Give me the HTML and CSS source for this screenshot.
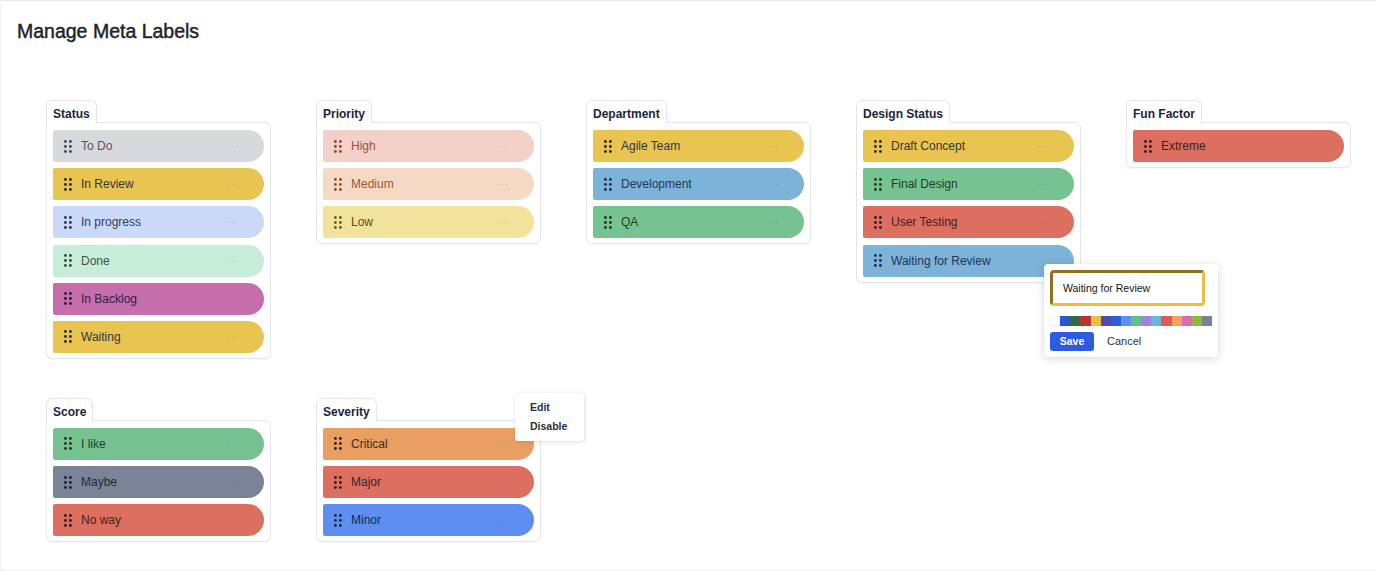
FILE: index.html
```html
<!DOCTYPE html>
<html lang="en">
<head>
<meta charset="utf-8">
<title>Manage Meta Labels</title>
<link rel="stylesheet" href="styles.css">
</head>
<body>
<div class="page">
  <h1 class="page-title">Manage Meta Labels</h1>

  <div class="board">
    <!-- Status -->
    <section class="group">
      <div class="group-tab">Status</div>
      <ul class="group-list">
        <li class="label tone-gray"><svg class="grip" viewBox="0 0 8 13"><circle cx="1.4" cy="1.5" r="1.4"/><circle cx="6.4" cy="1.5" r="1.4"/><circle cx="1.4" cy="6.5" r="1.4"/><circle cx="6.4" cy="6.5" r="1.4"/><circle cx="1.4" cy="11.5" r="1.4"/><circle cx="6.4" cy="11.5" r="1.4"/></svg><span class="label-name">To Do</span><span class="label-more">···</span></li>
        <li class="label tone-yellow"><svg class="grip" viewBox="0 0 8 13"><circle cx="1.4" cy="1.5" r="1.4"/><circle cx="6.4" cy="1.5" r="1.4"/><circle cx="1.4" cy="6.5" r="1.4"/><circle cx="6.4" cy="6.5" r="1.4"/><circle cx="1.4" cy="11.5" r="1.4"/><circle cx="6.4" cy="11.5" r="1.4"/></svg><span class="label-name">In Review</span><span class="label-more">···</span></li>
        <li class="label tone-periwinkle"><svg class="grip" viewBox="0 0 8 13"><circle cx="1.4" cy="1.5" r="1.4"/><circle cx="6.4" cy="1.5" r="1.4"/><circle cx="1.4" cy="6.5" r="1.4"/><circle cx="6.4" cy="6.5" r="1.4"/><circle cx="1.4" cy="11.5" r="1.4"/><circle cx="6.4" cy="11.5" r="1.4"/></svg><span class="label-name">In progress</span><span class="label-more">···</span></li>
        <li class="label tone-mint"><svg class="grip" viewBox="0 0 8 13"><circle cx="1.4" cy="1.5" r="1.4"/><circle cx="6.4" cy="1.5" r="1.4"/><circle cx="1.4" cy="6.5" r="1.4"/><circle cx="6.4" cy="6.5" r="1.4"/><circle cx="1.4" cy="11.5" r="1.4"/><circle cx="6.4" cy="11.5" r="1.4"/></svg><span class="label-name">Done</span><span class="label-more">···</span></li>
        <li class="label tone-magenta"><svg class="grip" viewBox="0 0 8 13"><circle cx="1.4" cy="1.5" r="1.4"/><circle cx="6.4" cy="1.5" r="1.4"/><circle cx="1.4" cy="6.5" r="1.4"/><circle cx="6.4" cy="6.5" r="1.4"/><circle cx="1.4" cy="11.5" r="1.4"/><circle cx="6.4" cy="11.5" r="1.4"/></svg><span class="label-name">In Backlog</span><span class="label-more">···</span></li>
        <li class="label tone-yellow"><svg class="grip" viewBox="0 0 8 13"><circle cx="1.4" cy="1.5" r="1.4"/><circle cx="6.4" cy="1.5" r="1.4"/><circle cx="1.4" cy="6.5" r="1.4"/><circle cx="6.4" cy="6.5" r="1.4"/><circle cx="1.4" cy="11.5" r="1.4"/><circle cx="6.4" cy="11.5" r="1.4"/></svg><span class="label-name">Waiting</span><span class="label-more">···</span></li>
      </ul>
    </section>

    <!-- Priority -->
    <section class="group">
      <div class="group-tab">Priority</div>
      <ul class="group-list">
        <li class="label tone-rose"><svg class="grip" viewBox="0 0 8 13"><circle cx="1.4" cy="1.5" r="1.4"/><circle cx="6.4" cy="1.5" r="1.4"/><circle cx="1.4" cy="6.5" r="1.4"/><circle cx="6.4" cy="6.5" r="1.4"/><circle cx="1.4" cy="11.5" r="1.4"/><circle cx="6.4" cy="11.5" r="1.4"/></svg><span class="label-name">High</span><span class="label-more">···</span></li>
        <li class="label tone-peach"><svg class="grip" viewBox="0 0 8 13"><circle cx="1.4" cy="1.5" r="1.4"/><circle cx="6.4" cy="1.5" r="1.4"/><circle cx="1.4" cy="6.5" r="1.4"/><circle cx="6.4" cy="6.5" r="1.4"/><circle cx="1.4" cy="11.5" r="1.4"/><circle cx="6.4" cy="11.5" r="1.4"/></svg><span class="label-name">Medium</span><span class="label-more">···</span></li>
        <li class="label tone-butter"><svg class="grip" viewBox="0 0 8 13"><circle cx="1.4" cy="1.5" r="1.4"/><circle cx="6.4" cy="1.5" r="1.4"/><circle cx="1.4" cy="6.5" r="1.4"/><circle cx="6.4" cy="6.5" r="1.4"/><circle cx="1.4" cy="11.5" r="1.4"/><circle cx="6.4" cy="11.5" r="1.4"/></svg><span class="label-name">Low</span><span class="label-more">···</span></li>
      </ul>
    </section>

    <!-- Department -->
    <section class="group">
      <div class="group-tab">Department</div>
      <ul class="group-list">
        <li class="label tone-yellow"><svg class="grip" viewBox="0 0 8 13"><circle cx="1.4" cy="1.5" r="1.4"/><circle cx="6.4" cy="1.5" r="1.4"/><circle cx="1.4" cy="6.5" r="1.4"/><circle cx="6.4" cy="6.5" r="1.4"/><circle cx="1.4" cy="11.5" r="1.4"/><circle cx="6.4" cy="11.5" r="1.4"/></svg><span class="label-name">Agile Team</span><span class="label-more">···</span></li>
        <li class="label tone-sky"><svg class="grip" viewBox="0 0 8 13"><circle cx="1.4" cy="1.5" r="1.4"/><circle cx="6.4" cy="1.5" r="1.4"/><circle cx="1.4" cy="6.5" r="1.4"/><circle cx="6.4" cy="6.5" r="1.4"/><circle cx="1.4" cy="11.5" r="1.4"/><circle cx="6.4" cy="11.5" r="1.4"/></svg><span class="label-name">Development</span><span class="label-more">···</span></li>
        <li class="label tone-green"><svg class="grip" viewBox="0 0 8 13"><circle cx="1.4" cy="1.5" r="1.4"/><circle cx="6.4" cy="1.5" r="1.4"/><circle cx="1.4" cy="6.5" r="1.4"/><circle cx="6.4" cy="6.5" r="1.4"/><circle cx="1.4" cy="11.5" r="1.4"/><circle cx="6.4" cy="11.5" r="1.4"/></svg><span class="label-name">QA</span><span class="label-more">···</span></li>
      </ul>
    </section>

    <!-- Design Status -->
    <section class="group">
      <div class="group-tab">Design Status</div>
      <ul class="group-list">
        <li class="label tone-yellow"><svg class="grip" viewBox="0 0 8 13"><circle cx="1.4" cy="1.5" r="1.4"/><circle cx="6.4" cy="1.5" r="1.4"/><circle cx="1.4" cy="6.5" r="1.4"/><circle cx="6.4" cy="6.5" r="1.4"/><circle cx="1.4" cy="11.5" r="1.4"/><circle cx="6.4" cy="11.5" r="1.4"/></svg><span class="label-name">Draft Concept</span><span class="label-more">···</span></li>
        <li class="label tone-green"><svg class="grip" viewBox="0 0 8 13"><circle cx="1.4" cy="1.5" r="1.4"/><circle cx="6.4" cy="1.5" r="1.4"/><circle cx="1.4" cy="6.5" r="1.4"/><circle cx="6.4" cy="6.5" r="1.4"/><circle cx="1.4" cy="11.5" r="1.4"/><circle cx="6.4" cy="11.5" r="1.4"/></svg><span class="label-name">Final Design</span><span class="label-more">···</span></li>
        <li class="label tone-coral"><svg class="grip" viewBox="0 0 8 13"><circle cx="1.4" cy="1.5" r="1.4"/><circle cx="6.4" cy="1.5" r="1.4"/><circle cx="1.4" cy="6.5" r="1.4"/><circle cx="6.4" cy="6.5" r="1.4"/><circle cx="1.4" cy="11.5" r="1.4"/><circle cx="6.4" cy="11.5" r="1.4"/></svg><span class="label-name">User Testing</span><span class="label-more">···</span></li>
        <li class="label tone-sky"><svg class="grip" viewBox="0 0 8 13"><circle cx="1.4" cy="1.5" r="1.4"/><circle cx="6.4" cy="1.5" r="1.4"/><circle cx="1.4" cy="6.5" r="1.4"/><circle cx="6.4" cy="6.5" r="1.4"/><circle cx="1.4" cy="11.5" r="1.4"/><circle cx="6.4" cy="11.5" r="1.4"/></svg><span class="label-name">Waiting for Review</span><span class="label-more">···</span>
          <div class="label-editor">
            <input class="editor-input" type="text" value="Waiting for Review">
            <div class="swatches">
              <span class="swatch sw-white"></span>
              <span class="swatch sw-blue"></span>
              <span class="swatch sw-forest"></span>
              <span class="swatch sw-brick"></span>
              <span class="swatch sw-gold"></span>
              <span class="swatch sw-indigo"></span>
              <span class="swatch sw-royal"></span>
              <span class="swatch sw-cornflower"></span>
              <span class="swatch sw-jade"></span>
              <span class="swatch sw-lavender"></span>
              <span class="swatch sw-sky"></span>
              <span class="swatch sw-red"></span>
              <span class="swatch sw-orange"></span>
              <span class="swatch sw-pink"></span>
              <span class="swatch sw-lime"></span>
              <span class="swatch sw-slate"></span>
            </div>
            <div class="editor-actions">
              <button class="btn-save" type="button">Save</button>
              <button class="btn-cancel" type="button">Cancel</button>
            </div>
          </div>
        </li>
      </ul>
    </section>

    <!-- Fun Factor -->
    <section class="group">
      <div class="group-tab">Fun Factor</div>
      <ul class="group-list">
        <li class="label tone-coral"><svg class="grip" viewBox="0 0 8 13"><circle cx="1.4" cy="1.5" r="1.4"/><circle cx="6.4" cy="1.5" r="1.4"/><circle cx="1.4" cy="6.5" r="1.4"/><circle cx="6.4" cy="6.5" r="1.4"/><circle cx="1.4" cy="11.5" r="1.4"/><circle cx="6.4" cy="11.5" r="1.4"/></svg><span class="label-name">Extreme</span><span class="label-more">···</span></li>
      </ul>
    </section>

    <!-- Score -->
    <section class="group">
      <div class="group-tab">Score</div>
      <ul class="group-list">
        <li class="label tone-green"><svg class="grip" viewBox="0 0 8 13"><circle cx="1.4" cy="1.5" r="1.4"/><circle cx="6.4" cy="1.5" r="1.4"/><circle cx="1.4" cy="6.5" r="1.4"/><circle cx="6.4" cy="6.5" r="1.4"/><circle cx="1.4" cy="11.5" r="1.4"/><circle cx="6.4" cy="11.5" r="1.4"/></svg><span class="label-name">I like</span><span class="label-more">···</span></li>
        <li class="label tone-slate"><svg class="grip" viewBox="0 0 8 13"><circle cx="1.4" cy="1.5" r="1.4"/><circle cx="6.4" cy="1.5" r="1.4"/><circle cx="1.4" cy="6.5" r="1.4"/><circle cx="6.4" cy="6.5" r="1.4"/><circle cx="1.4" cy="11.5" r="1.4"/><circle cx="6.4" cy="11.5" r="1.4"/></svg><span class="label-name">Maybe</span><span class="label-more">···</span></li>
        <li class="label tone-coral"><svg class="grip" viewBox="0 0 8 13"><circle cx="1.4" cy="1.5" r="1.4"/><circle cx="6.4" cy="1.5" r="1.4"/><circle cx="1.4" cy="6.5" r="1.4"/><circle cx="6.4" cy="6.5" r="1.4"/><circle cx="1.4" cy="11.5" r="1.4"/><circle cx="6.4" cy="11.5" r="1.4"/></svg><span class="label-name">No way</span><span class="label-more">···</span></li>
      </ul>
    </section>

    <!-- Severity -->
    <section class="group">
      <div class="group-tab">Severity</div>
      <ul class="group-list">
        <li class="label tone-tangerine"><svg class="grip" viewBox="0 0 8 13"><circle cx="1.4" cy="1.5" r="1.4"/><circle cx="6.4" cy="1.5" r="1.4"/><circle cx="1.4" cy="6.5" r="1.4"/><circle cx="6.4" cy="6.5" r="1.4"/><circle cx="1.4" cy="11.5" r="1.4"/><circle cx="6.4" cy="11.5" r="1.4"/></svg><span class="label-name">Critical</span><span class="label-more">···</span>
          <ul class="label-menu">
            <li class="menu-item">Edit</li>
            <li class="menu-item">Disable</li>
          </ul>
        </li>
        <li class="label tone-coral"><svg class="grip" viewBox="0 0 8 13"><circle cx="1.4" cy="1.5" r="1.4"/><circle cx="6.4" cy="1.5" r="1.4"/><circle cx="1.4" cy="6.5" r="1.4"/><circle cx="6.4" cy="6.5" r="1.4"/><circle cx="1.4" cy="11.5" r="1.4"/><circle cx="6.4" cy="11.5" r="1.4"/></svg><span class="label-name">Major</span><span class="label-more">···</span></li>
        <li class="label tone-blue"><svg class="grip" viewBox="0 0 8 13"><circle cx="1.4" cy="1.5" r="1.4"/><circle cx="6.4" cy="1.5" r="1.4"/><circle cx="1.4" cy="6.5" r="1.4"/><circle cx="6.4" cy="6.5" r="1.4"/><circle cx="1.4" cy="11.5" r="1.4"/><circle cx="6.4" cy="11.5" r="1.4"/></svg><span class="label-name">Minor</span><span class="label-more">···</span></li>
      </ul>
    </section>
  </div>
</div>
</body>
</html>
```

FILE: styles.css
```css
* {
  box-sizing: border-box;
}

html, body {
  margin: 0;
  padding: 0;
  background: #ffffff;
}

body {
  font-family: "Liberation Sans", Arial, sans-serif;
  color: #1f2433;
}

.page {
  height: 571px;
  border-top: 1px solid #e6e8ee;
  border-bottom: 1px solid #eceef3;
  border-left: 1px solid #f1f3f7;
  padding: 19px 16px 0;
  overflow: hidden;
}

.page-title {
  margin: 0;
  font-size: 19.5px;
  line-height: 22px;
  font-weight: 400;
  color: #222428;
  -webkit-text-stroke: 0.45px #222428;
}

/* grid of label groups */
.board {
  margin-top: 58px;
  padding-left: 29px;
  display: grid;
  grid-template-columns: repeat(5, 225px);
  column-gap: 45px;
  row-gap: 39px;
  align-items: start;
}

.group {
  display: flex;
  flex-direction: column;
  align-items: flex-start;
}

.group-tab {
  position: relative;
  z-index: 1;
  margin-bottom: -1px;
  padding: 6px 6px 2px;
  font-size: 12px;
  line-height: 14px;
  font-weight: 700;
  color: #1e2538;
  background: #ffffff;
  border: 1px solid #e4e6eb;
  border-bottom: none;
  border-radius: 6px 6px 0 0;
}

.group-list {
  list-style: none;
  margin: 0;
  width: 225px;
  padding: 7px 6px 5px;
  display: flex;
  flex-direction: column;
  gap: 6.2px;
  border: 1px solid #e4e6eb;
  border-radius: 0 6px 6px 6px;
  background: #ffffff;
  box-shadow: 0 1px 2px rgba(20, 30, 60, 0.04);
}

/* one label pill */
.label {
  position: relative;
  display: flex;
  align-items: center;
  height: 32px;
  padding-left: 11px;
  border-radius: 2px 16px 16px 2px;
  font-size: 12px;
  color: var(--ink);
  background: var(--fill);
}

.grip {
  width: 8px;
  height: 13px;
  flex: none;
  fill: var(--grip, #242a3a);
}

.label-name {
  margin-left: 9px;
  flex: 1;
  white-space: nowrap;
}

.label-more {
  margin-right: 25px;
  font-size: 11px;
  letter-spacing: 0.5px;
  color: rgba(110, 115, 125, 0.4);
}

.tone-gray       { --fill: #d8d9dd; --ink: #51566a; --grip: #3f4450; }
.tone-yellow     { --fill: #e9c451; --ink: #33343a; --grip: #26283a; }
.tone-periwinkle { --fill: #cad9f7; --ink: #323c5a; --grip: #2a3350; }
.tone-mint       { --fill: #c7ecd7; --ink: #3a5848; --grip: #2f4a3c; }
.tone-magenta    { --fill: #c66dab; --ink: #38203e; --grip: #2a1a30; }
.tone-rose       { --fill: #f3d0c8; --ink: #a04e3d; --grip: #8e4434; }
.tone-peach      { --fill: #f6d9c4; --ink: #9c5532; --grip: #8a4a2a; }
.tone-butter     { --fill: #f1e39c; --ink: #504d2e; --grip: #6a5a20; }
.tone-sky        { --fill: #7db3d9; --ink: #213556; --grip: #1c2a44; }
.tone-green      { --fill: #76c391; --ink: #213c2c; --grip: #1d3226; }
.tone-coral      { --fill: #dd6f61; --ink: #3a2226; --grip: #2c1a1e; }
.tone-slate      { --fill: #7b8397; --ink: #232838; --grip: #1c2030; }
.tone-tangerine  { --fill: #e99e62; --ink: #3a2b22; --grip: #2a1f1a; }
.tone-blue       { --fill: #5e8ff0; --ink: #1b2a52; --grip: #182444; }

/* inline editor popover */
.label-editor {
  position: absolute;
  z-index: 5;
  left: 181px;
  top: 19px;
  width: 174px;
  padding: 6px;
  background: #ffffff;
  border-radius: 4px;
  box-shadow: 0 2px 10px rgba(30, 40, 60, 0.16), 0 0 1px rgba(30, 40, 60, 0.15);
  color: #1f2433;
}

.editor-input {
  display: block;
  width: 155px;
  height: 36px;
  margin: 0;
  padding: 0 0 0 10px;
  font-family: "Liberation Sans", Arial, sans-serif;
  font-size: 10.5px;
  color: #141414;
  background: #ffffff;
  border: 3px solid #e7c03f;
  border-top-color: #8f7221;
  border-left-color: #8f7221;
  border-radius: 4px;
  outline: none;
}

.swatches {
  display: flex;
  margin-top: 10px;
  height: 10px;
}

.swatch {
  flex: 1;
  height: 10px;
}

.sw-white      { background: #ffffff; box-shadow: inset 0 0 0 1px #f0f1f4; }
.sw-blue       { background: #2759d6; }
.sw-forest     { background: #2e6d42; }
.sw-brick      { background: #b8362c; }
.sw-gold       { background: #e9c23f; }
.sw-indigo     { background: #5848b4; }
.sw-royal      { background: #2c5fdc; }
.sw-cornflower { background: #5f91f1; }
.sw-jade       { background: #5cc18c; }
.sw-lavender   { background: #9b84e4; }
.sw-sky        { background: #6ab7d9; }
.sw-red        { background: #e4594d; }
.sw-orange     { background: #f1a35a; }
.sw-pink       { background: #d66db2; }
.sw-lime       { background: #90b83c; }
.sw-slate      { background: #798294; }

.editor-actions {
  display: flex;
  align-items: center;
  gap: 13px;
  margin-top: 6px;
}

.btn-save {
  width: 44px;
  height: 19px;
  padding: 0;
  border: none;
  border-radius: 3px;
  background: #2d5ce2;
  color: #ffffff;
  font-family: "Liberation Sans", Arial, sans-serif;
  font-size: 10.5px;
  font-weight: 700;
}

.btn-cancel {
  padding: 0;
  border: none;
  background: none;
  color: #2e3240;
  font-family: "Liberation Sans", Arial, sans-serif;
  font-size: 11px;
}

/* context menu for a label */
.label-menu {
  position: absolute;
  z-index: 5;
  left: 192px;
  top: -35px;
  width: 69px;
  margin: 0;
  padding: 5px 0 5px 15px;
  list-style: none;
  background: #ffffff;
  border-radius: 3px;
  box-shadow: 1px 1px 4px rgba(30, 40, 60, 0.14), 0 0 1px rgba(30, 40, 60, 0.12);
}

.menu-item {
  font-size: 10.5px;
  line-height: 19px;
  font-weight: 700;
  color: #2a2f47;
}
```
